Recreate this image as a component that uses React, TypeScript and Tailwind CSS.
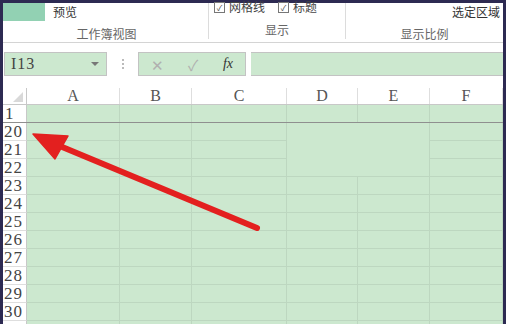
import React from "react";

const cols = [
  { l: "A", w: 93 },
  { l: "B", w: 72 },
  { l: "C", w: 95 },
  { l: "D", w: 71 },
  { l: "E", w: 72 },
  { l: "F", w: 73 },
];
const rows = ["20", "21", "22", "23", "24", "25", "26", "27", "28", "29", "30", ""];

const serif = { fontFamily: '"Liberation Serif", "DejaVu Serif", serif' };
const cjk = { fontFamily: '"Noto Sans CJK SC", "Noto Sans", sans-serif' };

function Cell({ w, noR, noB }: { w: number; noR?: boolean; noB?: boolean }) {
  return (
    <div
      className={`h-full shrink-0 border-[#bdd7c0] ${noR ? "" : "border-r"} ${noB ? "" : "border-b"}`}
      style={{ width: w }}
    />
  );
}

export default function App() {
  return (
    <div className="relative w-[506px] h-[324px] overflow-hidden bg-[#2d2a52] pl-[3px] pr-[3px] pt-[3px]" style={cjk}>
      <div className="w-[500px] h-[321px] bg-white flex flex-col">
        {/* Ribbon */}
        <div className="h-[40px] shrink-0 flex border-b border-[#d4d4d4] text-[12px]">
          <div className="w-[206px] flex flex-col border-r border-[#dcdcdc] mb-[3px]">
            <div className="h-[19px] flex items-center">
              <div className="w-[42px] h-[18px] bg-[#92d1b3]" />
              <span className="ml-[8px] text-[#333] leading-none">预览</span>
            </div>
            <div className="flex-1 flex items-center justify-center text-[#666] pl-[2px] pt-[4px]">工作簿视图</div>
          </div>
          <div className="w-[137px] flex flex-col border-r border-[#dcdcdc] mb-[3px]">
            <div className="h-[19px] relative">
              <div className="absolute left-[5px] top-[-5px] flex items-center gap-[4px] text-[#444]">
                <span className="w-[11px] h-[11px] border border-[#777] bg-white text-[8px] leading-[9px] text-center">✓</span>
                <span>网格线</span>
              </div>
              <div className="absolute left-[69px] top-[-5px] flex items-center gap-[4px] text-[#444]">
                <span className="w-[11px] h-[11px] border border-[#777] bg-white text-[8px] leading-[9px] text-center">✓</span>
                <span>标题</span>
              </div>
            </div>
            <div className="flex-1 flex items-center justify-center text-[#666] pt-[4px]">显示</div>
          </div>
          <div className="flex-1 flex flex-col mb-[3px]">
            <div className="h-[19px] flex items-center justify-end pr-[3px] text-[#333]">选定区域</div>
            <div className="flex-1 flex items-center justify-center text-[#666] pt-[4px]">显示比例</div>
          </div>
        </div>

        {/* Formula bar */}
        <div className="h-[45px] shrink-0 flex items-start pt-[9px]">
          <div className="ml-[1px] w-[103px] h-[24px] bg-[#cce8cf] border border-[#c3c3c3] flex items-center justify-between pl-[6px] pr-[7px]">
            <span className="text-[16px] text-[#444] tracking-[1px] leading-none" style={serif}>I13</span>
            <span className="w-0 h-0 border-l-[4px] border-r-[4px] border-t-[4px] border-l-transparent border-r-transparent border-t-[#777]" />
          </div>
          <div className="w-[31px] h-[24px] flex flex-col items-center justify-center gap-[2px]">
            <span className="w-[2px] h-[2px] bg-[#bbb]" />
            <span className="w-[2px] h-[2px] bg-[#bbb]" />
            <span className="w-[2px] h-[2px] bg-[#bbb]" />
          </div>
          <div className="w-[108px] h-[24px] bg-[#cce8cf] border border-[#c3c3c3] flex items-center">
            <span className="w-[36px] text-center text-[#b0b0b0] text-[15px] leading-none">✕</span>
            <span className="w-[36px] text-center text-[#b0b0b0] text-[15px] leading-none">✓</span>
            <span className="w-[34px] text-center text-[#333] text-[14px] italic leading-none" style={serif}>fx</span>
          </div>
          <div className="ml-[5px] flex-1 h-[24px] bg-[#cce8cf] border-y border-[#c3c3c3]" />
        </div>

        {/* Column header */}
        <div className="h-[17px] shrink-0 flex border-b border-[#c8c8c8]">
          <div className="w-[24px] shrink-0 border-r border-[#c8c8c8] relative">
            <span className="absolute right-[3px] bottom-[2px] w-0 h-0" style={{ borderBottom: "10px solid #d9d9d9", borderLeft: "10px solid transparent" }} />
          </div>
          {cols.map((c) => (
            <div
              key={c.l}
              className="shrink-0 border-r border-[#dedede] flex items-center justify-center text-[16px] text-[#555] leading-none"
              style={{ width: c.w, ...serif }}
            >
              {c.l}
            </div>
          ))}
        </div>

        {/* Row 1 */}
        <div className="h-[18px] shrink-0 flex border-b border-[#8f8f8f]">
          <div className="w-[24px] shrink-0 border-r border-[#c8c8c8] flex items-center pl-[2px] text-[17px] text-[#444] leading-none" style={serif}>
            1
          </div>
          {cols.map((c) => (
            <div key={c.l} className="shrink-0 h-full bg-[#cce8cf] border-r border-[#bdd7c0]" style={{ width: c.w }} />
          ))}
        </div>

        {/* Rows */}
        {rows.map((r, i) => {
          const merged = r === "20" || r === "21" || r === "22";
          return (
            <div key={i} className="h-[18px] shrink-0 flex">
              <div className="w-[24px] shrink-0 border-r border-b border-r-[#c8c8c8] border-b-[#dedede] bg-white flex items-center pl-[1px] text-[17px] text-[#444] leading-none tracking-[1px]" style={serif}>
                {r}
              </div>
              <div className="flex bg-[#cce8cf]">
                {cols.map((c) => {
                  const inMerge = merged && (c.l === "D" || c.l === "E");
                  return (
                    <Cell
                      key={c.l}
                      w={c.w}
                      noR={inMerge && c.l === "D"}
                      noB={inMerge && r !== "22"}
                    />
                  );
                })}
              </div>
            </div>
          );
        })}
      </div>

      {/* Annotation arrow */}
      <svg className="absolute left-0 top-0 pointer-events-none" width="506" height="324" viewBox="0 0 506 324">
        <line x1="257" y1="228" x2="55" y2="144" stroke="#e3201f" strokeWidth="6" strokeLinecap="round" />
        <polygon points="33,134 68,136 55,159" fill="#e3201f" stroke="#e3201f" strokeWidth="1.5" strokeLinejoin="round" />
      </svg>
    </div>
  );
}
